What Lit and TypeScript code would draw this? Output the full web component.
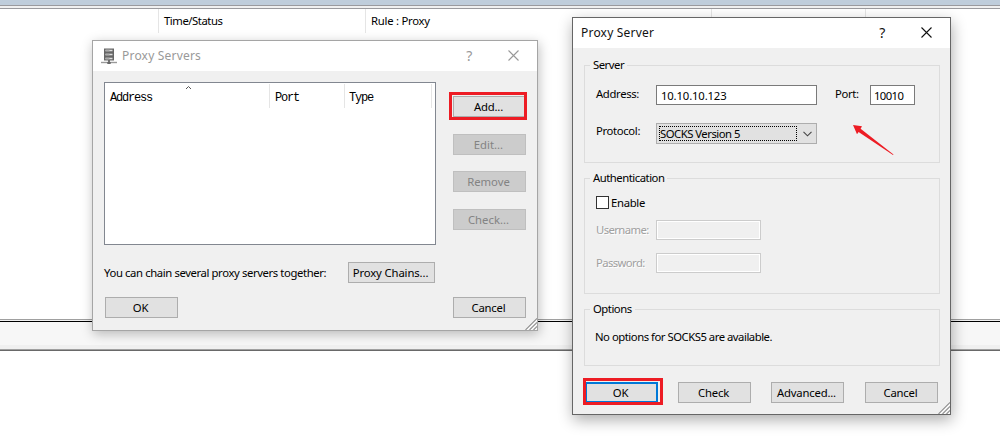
import { LitElement, html, css, svg } from "lit";
import { customElement, property } from "lit/decorators.js";

const grip = svg`<svg class="grip" width="12" height="12" viewBox="0 0 12 12">
  <path d="M1 12L12 1M5 12L12 5M9 12L12 9" stroke="#fff" stroke-width="2.4"/>
  <path d="M0.5 12L12 0.5M4.5 12L12 4.5M8.5 12L12 8.5" stroke="#8f8f8f" stroke-width="1.1"/>
</svg>`;

@customElement("win-button")
class WinButton extends LitElement {
  @property({ type: Boolean, reflect: true }) disabled = false;
  @property({ type: Boolean, reflect: true }) primary = false;
  static styles = css`
    :host { display: flex; width: 73px; height: 21px; flex: none; letter-spacing: -.2px; font-size: 11.3px; }
    .btn { box-sizing: border-box; width: 100%; height: 100%; padding: 0 2px 0 0; margin: 0;
      border: 1px solid #adadad; background: #e1e1e1; color: #000; text-align: center;
      font: inherit; line-height: 19px; white-space: nowrap; letter-spacing: inherit; }
    :host([disabled]) .btn { background: #ccc; border-color: #bfbfbf; color: #838383; letter-spacing: 0; }
    :host([primary]) .btn { border: 2px solid #0078d7; line-height: 17px; }
  `;
  render() { return html`<div class="btn"><slot></slot></div>`; }
}

@customElement("win-dialog")
class WinDialog extends LitElement {
  @property() heading = "";
  @property({ type: Boolean, reflect: true }) inactive = false;
  static styles = css`
    :host { display: flex; flex-direction: column; box-sizing: border-box;
      border: 1px solid #666; background: #f0f0f0; box-shadow: 1px 5px 14px rgba(0,0,0,.32); }
    :host([inactive]) { border-color: #a5a5a5; box-shadow: 1px 3px 11px rgba(0,0,0,.26); }
    .bar { display: flex; align-items: center; height: 30px; background: #fff; color: #111;
      flex: none; padding-left: 8px; }
    :host([inactive]) .bar { color: #999; }
    .icon { margin-right: 5px; display: block; }
    .title { flex: 1; font-size: 12px; letter-spacing: .2px; line-height: 30px; white-space: nowrap; }
    .help { font-size: 14px; width: 10px; text-align: center; margin-right: 34px; line-height: 28px; }
    .close { display: block; margin: -2px 18px 0 0; }
    .body { flex: 1; display: flex; flex-direction: column; position: relative; min-height: 0; }
    .grip { position: absolute; right: 0; bottom: 0; }
  `;
  render() {
    return html`
      <div class="bar">
        ${this.inactive ? html`<svg class="icon" width="16" height="17" viewBox="0 0 16 17">
          <path d="M3 .5h10v12H3z" fill="#666"/>
          <path d="M4.5 2.5h7M4.5 6.5h7M4.5 10.5h7" stroke="#ddd" stroke-width="1.6"/>
          <path d="M4.5 2.5h4M4.5 6.5h4M4.5 10.5h4" stroke="#aaa" stroke-width="1.6"/>
          <path d="M0 14.5h16" stroke="#999" stroke-width="1.4"/>
          <path d="M8 12v4M6.3 15h3.4" stroke="#666" stroke-width="1.8"/></svg>` : ""}
        <span class="title">${this.heading}</span>
        <span class="help">?</span>
        <svg class="close" width="11" height="11" viewBox="0 0 11 11">
          <path d="M.5 .5l10 10M10.5 .5l-10 10" stroke="currentColor" stroke-width="1.1"/></svg>
      </div>
      <div class="body"><slot></slot>${grip}</div>`;
  }
}

@customElement("win-group")
class WinGroup extends LitElement {
  @property() label = "";
  static styles = css`
    :host { display: flex; flex-direction: column; box-sizing: border-box; border: 1px solid #dcdcdc; }
    .legend { align-self: flex-start; margin: -9px 0 0 5px; padding: 0 3px; background: #f0f0f0;
      line-height: 16px; height: 17px; color: #000; flex: none; white-space: nowrap; }
  `;
  render() { return html`<span class="legend">${this.label}</span><slot></slot>`; }
}

@customElement("app-root")
class AppRoot extends LitElement {
  static styles = css`
    :host { display: block; position: relative; width: 1000px; height: 437px; overflow: hidden;
      background: #fff; color: #000; font-family: "Noto Sans", "Open Sans", sans-serif;
      font-size: 11.3px; letter-spacing: -.48px; }
    * { box-sizing: border-box; }
    .desk { display: flex; flex-direction: column; height: 437px; }
    .strip { height: 5px; background: #bfcddb; }
    .edge { height: 4px; border: solid #9a9a9e; border-width: 1px 0; background: #f0f0f0; }
    .heads { display: flex; height: 24px; line-height: 24px; font-size: 11.3px; letter-spacing: -.45px; }
    .head { border-left: 1px solid #e5e5e5; padding-left: 5px; width: 207px; white-space: nowrap; flex: none; }
    .blank { width: 158px; flex: none; }
    .rule { width: 346px; letter-spacing: -.25px; }
    .sent { width: 154px; }
    .last-head { width: 135px; }
    .room { height: 286px; }
    .split { height: 3px; border: solid #a0a0a0; border-width: 1px 0; border-bottom-color: #000; background: #f0f0f0; }
    .pane { height: 27px; background: #f7f7f7; border-bottom: 4px solid #f0f0f0; }
    .low { height: 2px; background: #696969; border-top: 1px solid #a0a0a0; }

    .servers { position: absolute; left: 92px; top: 40px; width: 446px; height: 291px; }
    .server { position: absolute; left: 572px; top: 17px; width: 379px; height: 398px; }

    .upper { display: flex; padding: 11px 11px 0; gap: 17px; height: 174px; flex: none; }
    .list { width: 332px; height: 163px; border: 1px solid #828790; background: #fff;
      display: flex; padding-top: 1px; }
    .col { position: relative; height: 24px; border-right: 1px solid #e5e5e5; padding-left: 5px;
      font: 12px/28px "Liberation Mono", monospace; letter-spacing: -1.2px; }
    .c1 { width: 165px; } .c2 { width: 75px; } .c3 { width: 87px; padding-left: 4px; }
    .sort { position: absolute; left: 80px; top: 1px; }
    .side { display: flex; flex-direction: column; padding-top: 14px; gap: 16.6px; }
    .chain { display: flex; align-items: center; padding: 17px 0 0 11px; height: 38px; flex: none; }
    .chain-text { width: 244px; white-space: nowrap; line-height: 21px; letter-spacing: -.39px; }
    .wide { width: 87px; letter-spacing: -.12px; }
    .foot { display: flex; justify-content: space-between; padding: 14px 11px 0 12px; }

    .mark { position: absolute; border: 3px solid #ed1c24; pointer-events: none; }
    .mark-add { left: 449px; top: 92px; width: 78px; height: 28px; }
    .mark-ok { left: 583px; top: 378px; width: 80px; height: 27px; }
    .arrow { position: absolute; left: 850px; top: 122px; }

    .groups { display: flex; flex-direction: column; padding: 17px 10px 0 11px; gap: 15px; flex: none; }
    .g1 { height: 98px; } .g2 { height: 116px; } .g3 { height: 57px; }
    .row { display: flex; align-items: center; padding-left: 11px; flex: none; height: 21px; white-space: nowrap; }
    .lab { width: 60px; line-height: 18px; padding-bottom: 2px; letter-spacing: -.35px; }
    .r2 .lab { padding-bottom: 5px; }
    .box { height: 20px; border: 1px solid #7a7a7a; background: #fff; line-height: 19px; padding-left: 4px; }
    .addr { width: 161px; letter-spacing: -.15px; }
    .port { width: 45px; letter-spacing: -.6px; padding-left: 3px; }
    .plab { width: 35px; margin-left: 18px; }
    .r1 { margin-top: 11px; height: 20px; } .r2 { margin-top: 18px; }
    .combo { width: 161px; height: 21px; border: 1px solid #adadad; background: #e1e1e1;
      display: flex; align-items: center; padding-left: 2px; }
    .focus { width: 138px; height: 15px; border: 1px dotted #000; line-height: 13px; letter-spacing: -.5px; }
    .chev { margin-left: 6px; }
    .r3 { margin-top: 9px; height: 13px; letter-spacing: -.3px; }
    .check { width: 13px; height: 13px; border: 1px solid #333; background: #fff; margin-right: 2px; }
    .off { color: #a0a0a0; text-shadow: 1px 1px #fff; letter-spacing: -.6px; padding-bottom: 0; }
    .empty { width: 105px; border-color: #ccc; background: #f0f0f0; box-shadow: inset 0 0 0 1px #fff; }
    .r4 { margin-top: 11px; height: 20px; } .r5 { margin-top: 13px; height: 20px; }
    .r6 { margin-top: 9px; padding-left: 10px; height: 18px; }
    .acts { display: flex; padding: 16px 0 0 12px; gap: 20px; }
    .last { margin-left: 1px; }
  `;
  render() {
    return html`
      <div class="desk">
        <div class="strip"></div><div class="edge"></div>
        <div class="heads">
          <div class="blank"></div><div class="head">Time/Status</div>
          <div class="head rule">Rule : Proxy</div><div class="head sent"></div>
          <div class="head last-head"></div>
        </div>
        <div class="room"></div>
        <div class="split"></div><div class="pane"></div><div class="low"></div>
      </div>

      <win-dialog class="servers" inactive heading="Proxy Servers">
        <div class="upper">
          <div class="list">
            <div class="col c1">Address
              <svg class="sort" width="7" height="5" viewBox="0 0 7 5"><path d="M1 4l2.5-2.5L6 4" fill="none" stroke="#555"/></svg>
            </div>
            <div class="col c2">Port</div>
            <div class="col c3">Type</div>
          </div>
          <div class="side">
            <win-button>Add...</win-button>
            <win-button disabled>Edit...</win-button>
            <win-button disabled>Remove</win-button>
            <win-button disabled>Check...</win-button>
          </div>
        </div>
        <div class="chain">
          <span class="chain-text">You can chain several proxy servers together:</span>
          <win-button class="wide">Proxy Chains...</win-button>
        </div>
        <div class="foot"><win-button>OK</win-button><win-button>Cancel</win-button></div>
      </win-dialog>

      <win-dialog class="server" heading="Proxy Server">
        <div class="groups">
          <win-group class="g1" label="Server">
            <div class="row r1">
              <span class="lab">Address:</span><div class="box addr">10.10.10.123</div>
              <span class="lab plab">Port:</span><div class="box port">10010</div>
            </div>
            <div class="row r2">
              <span class="lab">Protocol:</span>
              <div class="combo"><span class="focus">SOCKS Version 5</span>
                <svg class="chev" width="9" height="6" viewBox="0 0 9 6"><path d="M.5 .8l4 4 4-4" fill="none" stroke="#444" stroke-width="1.1"/></svg>
              </div>
            </div>
          </win-group>
          <win-group class="g2" label="Authentication">
            <div class="row r3"><div class="check"></div><span>Enable</span></div>
            <div class="row r4"><span class="lab off">Username:</span><div class="box empty"></div></div>
            <div class="row r5"><span class="lab off">Password:</span><div class="box empty"></div></div>
          </win-group>
          <win-group class="g3" label="Options">
            <div class="row r6">No options for SOCKS5 are available.</div>
          </win-group>
        </div>
        <div class="acts">
          <win-button primary>OK</win-button><win-button>Check</win-button>
          <win-button>Advanced...</win-button><win-button class="last">Cancel</win-button>
        </div>
      </win-dialog>

      <div class="mark mark-add"></div>
      <div class="mark mark-ok"></div>
      <svg class="arrow" width="46" height="36" viewBox="0 0 46 36">
        <path d="M3 3L12 4.2L10.6 6.8L43.5 32.5L43 33L8.6 10L7 12.2Z" fill="#ed1c24"/>
      </svg>`;
  }
}
